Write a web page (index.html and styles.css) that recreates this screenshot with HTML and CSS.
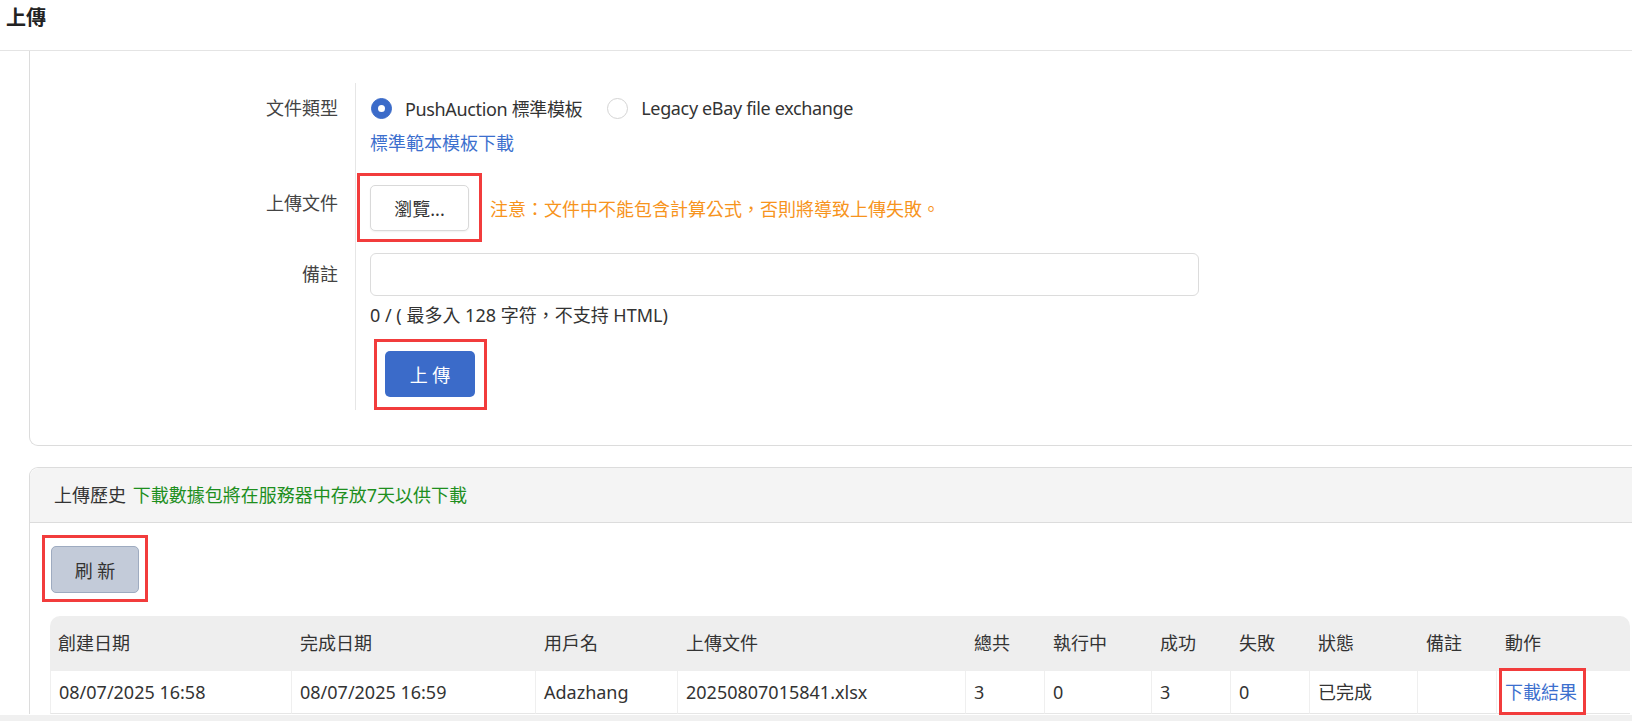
FILE: index.html
```html
<html>

<head>
    <meta charset="utf-8">
    <link rel="stylesheet" href="styles.css">
</head>

<body>
    <div class="topbar">
        <h1 class="title">上傳</h1>
    </div>
    <div class="page">
        <div class="card uploadCard">
            <div class="form">
                <div class="label rowType">文件類型</div>
                <div class="field rowType">
                    <div class="radios">
                        <label class="radio"><span class="dot on"></span>PushAuction 標準模板</label>
                        <label class="radio"><span class="dot"></span>Legacy eBay file exchange</label>
                    </div>
                    <a class="link">標準範本模板下載</a>
                </div>

                <div class="label rowFile">上傳文件</div>
                <div class="field rowFile">
                    <div class="fileLine">
                        <div class="mark markBrowse"><button class="btnBrowse">瀏覽...</button></div>
                        <span class="note">注意：文件中不能包含計算公式，否則將導致上傳失敗。</span>
                    </div>
                </div>

                <div class="label rowRemark">備註</div>
                <div class="field rowRemark">
                    <input class="remark" type="text">
                    <div class="counter">0 / ( 最多入 128 字符，不支持 HTML)</div>
                </div>

                <div class="label rowSubmit"></div>
                <div class="field rowSubmit">
                    <div class="mark markUpload"><button class="btnUpload">上 傳</button></div>
                </div>
            </div>
        </div>

        <div class="card history">
            <div class="cardHead">上傳歷史 <span class="green">下載數據包將在服務器中存放7天以供下載</span></div>
            <div class="cardBody">
                <div class="mark markRefresh"><button class="btnRefresh">刷 新</button></div>
                <table class="grid">
                    <colgroup>
                        <col style="width:242px">
                        <col style="width:244px">
                        <col style="width:142px">
                        <col style="width:288px">
                        <col style="width:79px">
                        <col style="width:107px">
                        <col style="width:79px">
                        <col style="width:79px">
                        <col style="width:108px">
                        <col style="width:79px">
                        <col style="width:133px">
                    </colgroup>
                    <thead>
                        <tr>
                            <th>創建日期</th>
                            <th>完成日期</th>
                            <th>用戶名</th>
                            <th>上傳文件</th>
                            <th>總共</th>
                            <th>執行中</th>
                            <th>成功</th>
                            <th>失敗</th>
                            <th>狀態</th>
                            <th>備註</th>
                            <th>動作</th>
                        </tr>
                    </thead>
                    <tbody>
                        <tr>
                            <td>08/07/2025 16:58</td>
                            <td>08/07/2025 16:59</td>
                            <td>Adazhang</td>
                            <td>20250807015841.xlsx</td>
                            <td>3</td>
                            <td>0</td>
                            <td>3</td>
                            <td>0</td>
                            <td>已完成</td>
                            <td></td>
                            <td><a class="link resultLink">下載結果</a></td>
                        </tr>
                    </tbody>
                </table>
            </div>
        </div>
    </div>
    <div class="scrollTrack"></div>
</body>

</html>
```

FILE: styles.css
```css
body {
    margin: 0;
    padding: 0;
    font-family: "Noto Sans", "Noto Sans CJK TC", sans-serif;
    font-size: 18px;
    color: #333;
    background: #fff;
    overflow: hidden;
}

.topbar {
    height: 50px;
    border-bottom: 1px solid #e4e4e4;
    padding-left: 6px;
}

.title {
    margin: 0;
    font-family: "Noto Sans CJK TC", sans-serif;
    font-size: 20px;
    font-weight: bold;
    line-height: 34px;
    color: #222;
}

.page {
    margin: 0 -60px 0 29px;
}

.card {
    border: 1px solid #dcdcdc;
    background: #fff;
}

.uploadCard {
    border-top: none;
    border-radius: 0 0 0 9px;
    padding: 32px 0 35px;
}

/* form */
.form {
    display: grid;
    grid-template-columns: 325px 1fr;
}

.label {
    text-align: right;
    padding-right: 17px;
    color: #444;
    line-height: 30px;
}

.field {
    border-left: 1px solid #e6e6e6;
    padding-left: 14px;
}

.label.rowType,
.field.rowType {
    padding-top: 10px;
}

.radios {
    display: flex;
    align-items: center;
    height: 30px;
}

.radio {
    display: flex;
    align-items: center;
    margin-right: 24px;
    color: #333;
    letter-spacing: -0.35px;
}

.dot {
    width: 19px;
    height: 19px;
    border-radius: 50%;
    border: 1px solid #d4d4d4;
    background: #fff;
    margin: 0 13px 0 1px;
    box-sizing: content-box;
    position: relative;
}

.dot.on {
    background: #3b6bc9;
    border-color: #3b6bc9;
}

.dot.on::after {
    content: "";
    position: absolute;
    left: 6px;
    top: 6px;
    width: 7px;
    height: 7px;
    border-radius: 50%;
    background: #fff;
}

.link {
    color: #3c6fce;
    text-decoration: none;
    cursor: pointer;
}

.rowType .link {
    display: block;
    margin-top: 5px;
    line-height: 30px;
}

.label.rowFile {
    padding-top: 30px;
}

.field.rowFile {
    padding-top: 15px;
}

.fileLine {
    display: flex;
    align-items: center;
}

.mark {
    display: inline-block;
    border: 3px solid #f23c3c;
}

.markBrowse {
    padding: 9px 10px 8px;
    margin-left: -13px;
    margin-right: 8px;
}

.btnBrowse {
    display: block;
    width: 99px;
    height: 46px;
    border: 1px solid #d9d9d9;
    border-radius: 5px;
    background: #fff;
    font: inherit;
    color: #333;
    box-shadow: 0 1px 2px rgba(0, 0, 0, 0.06);
}

.note {
    color: #f7941d;
}

.label.rowRemark {
    padding-top: 11px;
    line-height: 43px;
}

.field.rowRemark {
    padding-top: 11px;
}

.remark {
    display: block;
    width: 829px;
    height: 43px;
    box-sizing: border-box;
    border: 1px solid #dcdcdc;
    border-radius: 6px;
    font: inherit;
}

.counter {
    margin-top: 7px;
    line-height: 24px;
    color: #333;
}

.field.rowSubmit {
    padding-top: 12px;
}

.markUpload {
    padding: 9px 9px 10px 8px;
    margin-left: 4px;
}

.btnUpload {
    display: block;
    width: 90px;
    height: 46px;
    border: none;
    border-radius: 5px;
    background: #3b6bc9;
    color: #fff;
    font: inherit;
}

/* history */
.history {
    margin-top: 21px;
    border-radius: 9px 0 0 0;
    border-bottom: none;
}

.cardHead {
    height: 54px;
    line-height: 54px;
    background: #f4f4f4;
    border-bottom: 1px solid #dcdcdc;
    border-radius: 9px 0 0 0;
    padding-left: 24px;
    color: #333;
}

.green {
    color: #1e8f1e;
    margin-left: 2px;
}

.cardBody {
    padding: 12px 0 0 12px;
}

.markRefresh {
    padding: 8px 6px 6px;
}

.btnRefresh {
    display: block;
    width: 88px;
    height: 47px;
    border: 1px solid #9eabc0;
    border-radius: 5px;
    background: #c3cbd9;
    color: #333;
    font: inherit;
}

.grid {
    margin: 14px 0 0 8px;
    width: 1580px;
    table-layout: fixed;
    border-collapse: separate;
    border-spacing: 0;
    font-size: 18px;
}

.grid th {
    background: #eee;
    text-align: left;
    font-weight: normal;
    padding: 15px 8px;
    line-height: 25px;
    color: #333;
}

.grid th:first-child {
    border-top-left-radius: 10px;
}

.grid th:last-child {
    border-top-right-radius: 10px;
}

.grid td {
    padding: 9px 8px;
    line-height: 24px;
    border-bottom: 1px solid #e6e6e6;
    border-right: 1px solid #efefef;
    white-space: nowrap;
}

.grid td:first-child {
    border-left: 1px solid #efefef;
}

.grid td:last-child {
    border-right: none;
}

.resultLink {
    position: relative;
}

.resultLink::after {
    content: "";
    position: absolute;
    left: -6px;
    right: -9px;
    top: -12px;
    bottom: -11px;
    border: 3px solid #f23c3c;
}

.scrollTrack {
    position: fixed;
    left: 0;
    right: 0;
    bottom: 0;
    height: 6px;
    background: #f0f0f0;
}
```
